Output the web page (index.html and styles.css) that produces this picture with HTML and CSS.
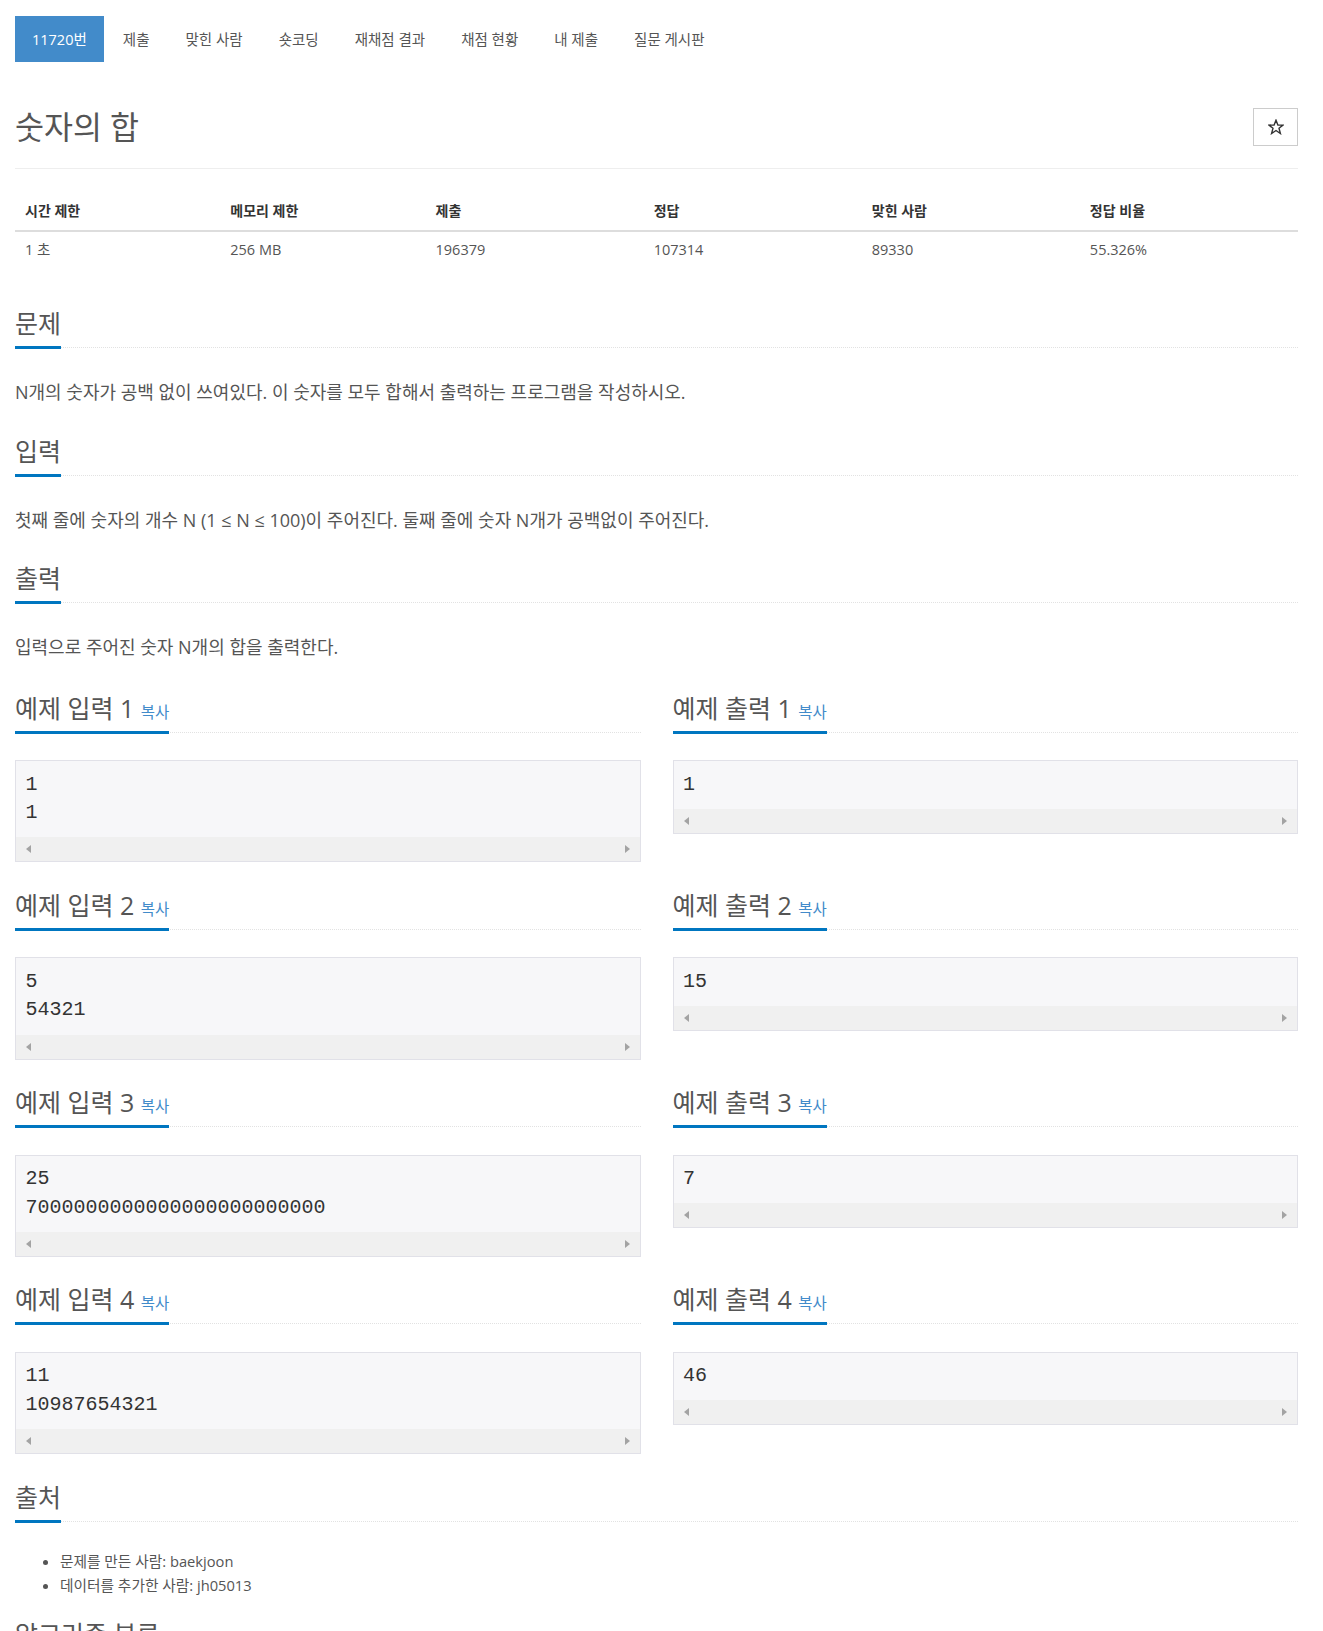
FILE: index.html
```html
<!DOCTYPE html>
<html lang="ko">
<head>
  <meta charset="UTF-8" />
  <title>11720번: 숫자의 합</title>
  <link rel="stylesheet" href="styles.css">
</head>
<body>

<div class="page">

  <!-- 문제 메뉴 -->
  <ul class="problem-menu">
    <li class="active"><a href="#">11720번</a></li>
    <li><a href="#">제출</a></li>
    <li><a href="#">맞힌 사람</a></li>
    <li><a href="#">숏코딩</a></li>
    <li><a href="#">재채점 결과</a></li>
    <li><a href="#">채점 현황</a></li>
    <li><a href="#">내 제출</a></li>
    <li><a href="#">질문 게시판</a></li>
  </ul>

  <div class="title-bar">
    <h1 class="problem-title">숫자의 합</h1>
    <button class="star-btn" title="즐겨찾기">
      <svg width="16" height="16" viewBox="0 0 16 16">
        <polygon points="8,1.2 9.9,6 15,6.1 11,9.3 12.4,14.5 8,11.5 3.6,14.5 5,9.3 1,6.1 6.1,6" fill="none" stroke="#333" stroke-width="1.4" stroke-linejoin="miter"/>
      </svg>
    </button>
  </div>

  <table class="info-table">
    <thead>
      <tr>
        <th style="width: 16%">시간 제한</th>
        <th style="width: 16%">메모리 제한</th>
        <th style="width: 17%">제출</th>
        <th style="width: 17%">정답</th>
        <th style="width: 17%">맞힌 사람</th>
        <th style="width: 17%">정답 비율</th>
      </tr>
    </thead>
    <tbody>
      <tr>
        <td>1 초</td>
        <td>256 MB</td>
        <td>196379</td>
        <td>107314</td>
        <td>89330</td>
        <td>55.326%</td>
      </tr>
    </tbody>
  </table>

  <section class="section">
    <div class="headline"><h2>문제</h2></div>
    <p>N개의 숫자가 공백 없이 쓰여있다. 이 숫자를 모두 합해서 출력하는 프로그램을 작성하시오.</p>
  </section>

  <section class="section">
    <div class="headline"><h2>입력</h2></div>
    <p>첫째 줄에 숫자의 개수 N (1 ≤ N ≤ 100)이 주어진다. 둘째 줄에 숫자 N개가 공백없이 주어진다.</p>
  </section>

  <section class="section">
    <div class="headline"><h2>출력</h2></div>
    <p>입력으로 주어진 숫자 N개의 합을 출력한다.</p>
  </section>

  <!-- 예제 -->
  <div class="samples">
    <div class="sample">
      <div class="headline"><h2>예제 입력 1 <a class="copy" href="#">복사</a></h2></div>
      <div class="sample-box">
        <pre>1
1</pre>
        <div class="hscroll"><span class="arrow-left"></span><span class="arrow-right"></span></div>
      </div>
    </div>
    <div class="sample">
      <div class="headline"><h2>예제 출력 1 <a class="copy" href="#">복사</a></h2></div>
      <div class="sample-box">
        <pre>1</pre>
        <div class="hscroll"><span class="arrow-left"></span><span class="arrow-right"></span></div>
      </div>
    </div>

    <div class="sample">
      <div class="headline"><h2>예제 입력 2 <a class="copy" href="#">복사</a></h2></div>
      <div class="sample-box">
        <pre>5
54321</pre>
        <div class="hscroll"><span class="arrow-left"></span><span class="arrow-right"></span></div>
      </div>
    </div>
    <div class="sample">
      <div class="headline"><h2>예제 출력 2 <a class="copy" href="#">복사</a></h2></div>
      <div class="sample-box">
        <pre>15</pre>
        <div class="hscroll"><span class="arrow-left"></span><span class="arrow-right"></span></div>
      </div>
    </div>

    <div class="sample">
      <div class="headline"><h2>예제 입력 3 <a class="copy" href="#">복사</a></h2></div>
      <div class="sample-box">
        <pre>25
7000000000000000000000000</pre>
        <div class="hscroll"><span class="arrow-left"></span><span class="arrow-right"></span></div>
      </div>
    </div>
    <div class="sample">
      <div class="headline"><h2>예제 출력 3 <a class="copy" href="#">복사</a></h2></div>
      <div class="sample-box">
        <pre>7</pre>
        <div class="hscroll"><span class="arrow-left"></span><span class="arrow-right"></span></div>
      </div>
    </div>

    <div class="sample">
      <div class="headline"><h2>예제 입력 4 <a class="copy" href="#">복사</a></h2></div>
      <div class="sample-box">
        <pre>11
10987654321</pre>
        <div class="hscroll"><span class="arrow-left"></span><span class="arrow-right"></span></div>
      </div>
    </div>
    <div class="sample">
      <div class="headline"><h2>예제 출력 4 <a class="copy" href="#">복사</a></h2></div>
      <div class="sample-box">
        <pre>46</pre>
        <div class="hscroll"><span class="arrow-left"></span><span class="arrow-right"></span></div>
      </div>
    </div>
  </div>

  <section class="section">
    <div class="headline"><h2>출처</h2></div>
    <ul class="source-list">
      <li>문제를 만든 사람: <a href="#">baekjoon</a></li>
      <li>데이터를 추가한 사람: <a href="#">jh05013</a></li>
    </ul>
  </section>

  <section class="section section-tags">
    <div class="headline"><h2>알고리즘 분류</h2></div>
  </section>

</div>

</body>
</html>
```

FILE: styles.css
```css
html, body {
  margin: 0;
  padding: 0;
  background: #fff;
  color: #555;
  font-family: "Open Sans", "Noto Sans CJK KR", sans-serif;
  font-size: 14px;
}

a {
  color: #555;
  text-decoration: none;
}

.page {
  padding: 16px 25px 0 15px;
}

/* 상단 메뉴 */
.problem-menu {
  display: flex;
  list-style: none;
  margin: 0;
  padding: 0;
}

.problem-menu li a {
  display: block;
  padding: 12.5px 17px;
  margin-right: 2px;
  line-height: 21px;
  font-size: 14.5px;
  color: #555;
}

.problem-menu li.active a {
  background-color: #428bca;
  color: #fff;
}

/* 제목 */
.title-bar {
  display: flex;
  justify-content: space-between;
  align-items: center;
  margin-top: 46px;
  padding-bottom: 22px;
  border-bottom: 1px solid #eee;
}

.problem-title {
  margin: 0;
  font-size: 31.5px;
  font-weight: normal;
  line-height: 1.1;
  color: #555;
}

.star-btn {
  width: 45px;
  height: 38px;
  margin: 0;
  padding: 0;
  background: #fff;
  border: 1px solid #ccc;
  display: flex;
  align-items: center;
  justify-content: center;
}

/* 제한 표 */
.info-table {
  width: 100%;
  border-collapse: collapse;
  margin: 22px 0 40px 0;
}

.info-table th {
  text-align: left;
  padding: 10px 10px 9px 10px;
  line-height: 20px;
  font-size: 14px;
  font-weight: bold;
  color: #333;
  border-bottom: 2px solid #ddd;
}

.info-table td {
  padding: 8px 10px 10px 10px;
  line-height: 20px;
  font-size: 14.5px;
  color: #555;
}

/* 섹션 */
.section {
  margin-top: 30px;
}

.headline {
  display: flex;
  border-bottom: 1px dotted #e2e2e2;
  margin-bottom: 27.5px;
}

.headline h2 {
  margin: 0 0 -2px 0;
  padding-bottom: 9px;
  font-size: 25px;
  font-weight: normal;
  line-height: 27px;
  color: #555;
  border-bottom: 3px solid #0076c0;
}

.headline .copy {
  font-size: 15.5px;
  line-height: 1;
  color: #428bca;
}

.section p {
  margin: 29px 0 0 0;
  font-size: 18px;
  line-height: 1.7;
}

/* 예제 */
.samples {
  display: grid;
  grid-template-columns: 1fr 1fr;
  column-gap: 32px;
  row-gap: 29.5px;
  align-items: start;
  margin-top: 32px;
}

.sample-box {
  background: #f7f7f9;
  border: 1px solid #e1e1e8;
}

.sample-box pre {
  margin: 0;
  padding: 9.5px;
  font-family: "Liberation Mono", monospace;
  font-size: 20px;
  line-height: 1.42857;
  color: #333;
}

.hscroll {
  position: relative;
  height: 24px;
  background: #f0f0f0;
}

.arrow-left,
.arrow-right {
  position: absolute;
  top: 8px;
  width: 0;
  height: 0;
  border-top: 4.5px solid transparent;
  border-bottom: 4.5px solid transparent;
}

.arrow-left {
  left: 10px;
  border-right: 5px solid #a3a3a3;
}

.arrow-right {
  right: 10px;
  border-left: 5px solid #a3a3a3;
}

/* 출처 */
.source-list {
  margin: 27.5px 0 0 0;
  padding-left: 45px;
  font-size: 14.7px;
  line-height: 24px;
}

.section-tags {
  margin-top: 24px;
}
```
